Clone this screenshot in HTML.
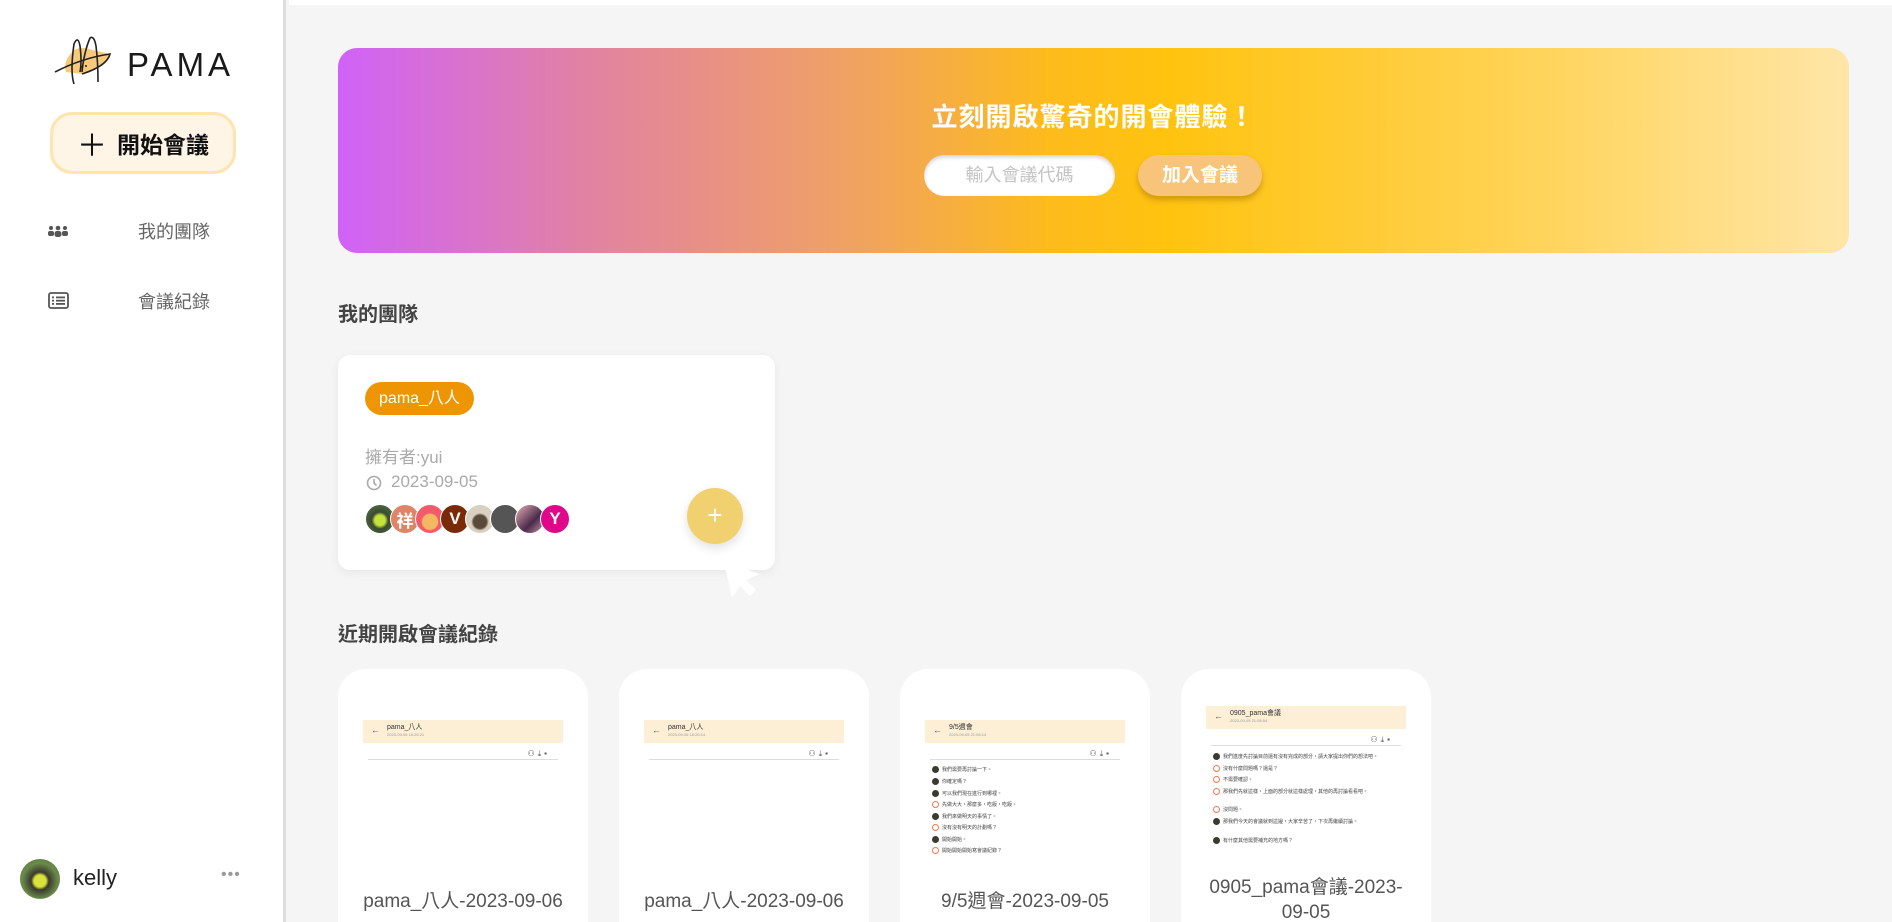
<!DOCTYPE html>
<html style="overflow:hidden;height:922px"><head><meta charset="utf-8"><style>
*{margin:0;padding:0;box-sizing:border-box}
body{width:1892px;height:922px;overflow:hidden;background:#f5f5f5;font-family:"Liberation Sans","Noto Sans CJK TC",sans-serif;position:relative}
.abs{position:absolute}
.side{left:0;top:0;width:286px;height:922px;background:#fff;border-right:3px solid #dcdcdc}
.topstrip{left:289px;top:0;width:1603px;height:5px;background:#fff}
.btn{left:50px;top:112px;width:186px;height:62px;border-radius:22px;background:#fff5e6;border:3px solid #ffe4ad;font-size:23px;font-weight:bold;color:#111;display:flex;align-items:center;justify-content:center;gap:10px}
.nav{font-size:18px;color:#666;left:138px}
.banner{left:338px;top:48px;width:1511px;height:205px;border-radius:19px;background:linear-gradient(90deg,#d062f8 0%,#e283a0 17%,#efa067 33%,#fdbb1c 47%,#ffc30f 55%,#ffd04a 75%,#ffe6a8 100%)}
.title{left:0;width:100%;top:49px;text-align:center;color:#fff;font-size:26px;font-weight:bold;letter-spacing:1px}
.h2{left:338px;font-size:20px;color:#444;font-weight:bold}
.card{background:#fff;border-radius:12px;box-shadow:0 3px 10px rgba(0,0,0,.06)}
.rc{top:669px;width:250px;height:253px;background:#fff;border-radius:28px 28px 0 0;overflow:visible}
.hd{position:absolute;left:25px;width:200px;height:23px;background:#fdefd6}
.hd b{position:absolute;left:24px;top:2px;font-size:7px;font-weight:normal;color:#333}
.hd i{position:absolute;left:24px;top:12px;font-size:4px;font-style:normal;color:#999}
.hd s{position:absolute;left:8px;top:5px;font-size:9px;text-decoration:none;color:#555}
.ic{position:absolute;right:38px;font-size:8px;color:#555;letter-spacing:3px}
.ln{position:absolute;left:30px;width:190px;height:1px;background:#ddd}
.row{position:absolute;left:32px;font-size:5px;color:#444;display:flex;align-items:center;gap:3px}
.row span.a{width:7px;height:7px;border-radius:50%;background:#3a3a2e;display:inline-block}
.row span.o{width:7px;height:7px;border-radius:50%;border:1.5px solid #ef7a4f;display:inline-block}
.rt{position:absolute;left:0;width:100%;text-align:center;font-size:19px;color:#555;line-height:25px}
.av{position:absolute;width:30px;height:30px;border-radius:50%;border:1px solid #fff;top:504px;color:#fff;font-weight:bold;font-size:17px;display:flex;align-items:center;justify-content:center}
</style></head><body>
<div class="abs side"></div>
<div class="abs topstrip"></div>
<svg class="abs" style="left:52px;top:32px" width="62" height="56" viewBox="0 0 62 56">
<path d="M14 40 Q10 30 22 18 Q30 14 40 18 Q50 20 58 22 Q52 36 30 42 Z" fill="#f7c97a"/>
<path d="M3 40 Q30 26 58 22 Q55 34 30 42 M22 52 Q18 40 22 12 Q26 3 28 14 Q30 30 28 40 M30 40 Q32 20 38 6 Q42 3 44 14 Q46 30 46 50" stroke="#222" stroke-width="1.6" fill="none"/>
<circle cx="30" cy="35" r="1" fill="#222"/><circle cx="34" cy="34" r="1" fill="#222"/>
</svg>
<div class="abs" style="left:127px;top:46px;font-size:33px;letter-spacing:4px;color:#1a1a1a">PAMA</div>
<div class="abs btn"><span style="font-size:30px;font-weight:normal">＋</span>開始會議</div>
<svg class="abs" style="left:48px;top:225px" width="20" height="12" viewBox="0 0 20 12"><g fill="#555"><circle cx="3" cy="3" r="2"/><circle cx="10" cy="3" r="2.3"/><circle cx="17" cy="3" r="2"/><rect x="0" y="6" width="6" height="5" rx="2"/><rect x="6.5" y="6" width="7" height="6" rx="2.5"/><rect x="14" y="6" width="6" height="5" rx="2"/></g></svg>
<div class="abs nav" style="top:218px">我的團隊</div>
<svg class="abs" style="left:48px;top:292px" width="21" height="17" viewBox="0 0 21 17"><rect x="1" y="1" width="19" height="15" rx="2" fill="none" stroke="#555" stroke-width="1.8"/><g fill="#555"><rect x="4" y="4.5" width="2" height="1.8"/><rect x="8" y="4.5" width="9" height="1.8"/><rect x="4" y="7.8" width="2" height="1.8"/><rect x="8" y="7.8" width="9" height="1.8"/><rect x="4" y="11" width="2" height="1.8"/><rect x="8" y="11" width="9" height="1.8"/></g></svg>
<div class="abs nav" style="top:288px">會議紀錄</div>
<div class="abs" style="left:20px;top:859px;width:40px;height:40px;border-radius:50%;background:radial-gradient(circle at 50% 55%,#d9e43a 0 20%,#3a3a2e 30%,#6a8a4a 60%,#4a7a3a)"></div>
<div class="abs" style="left:73px;top:865px;font-size:22px;color:#222">kelly</div>
<div class="abs" style="left:221px;top:866px;font-size:16px;color:#999;letter-spacing:1px">•••</div>

<div class="abs banner">
<div class="abs title">立刻開啟驚奇的開會體驗！</div>
<div class="abs" style="left:586px;top:107px;width:191px;height:41px;border-radius:21px;background:#fff;box-shadow:inset 0 2px 4px rgba(0,0,0,.2);color:#c4c4c4;font-size:18px;text-align:center;line-height:41px">輸入會議代碼</div>
<div class="abs" style="left:800px;top:107px;width:124px;height:41px;border-radius:21px;background:#f7c47a;box-shadow:0 4px 6px rgba(120,80,0,.35);color:#fff;font-size:19px;font-weight:bold;text-align:center;line-height:41px">加入會議</div>
</div>

<div class="abs h2" style="top:298px">我的團隊</div>
<div class="abs card" style="left:338px;top:355px;width:437px;height:215px"></div>
<div class="abs" style="left:365px;top:382px;width:109px;height:33px;border-radius:17px;background:#ee9504;color:#fff;font-size:16px;text-align:center;line-height:33px">pama_八人</div>
<div class="abs" style="left:365px;top:443px;font-size:17px;color:#aaa">擁有者:yui</div>
<svg class="abs" style="left:366px;top:475px" width="16" height="16" viewBox="0 0 16 16"><circle cx="8" cy="8" r="6.5" fill="none" stroke="#aaa" stroke-width="1.6"/><path d="M8 4v4l2.5 2.5" stroke="#aaa" stroke-width="1.6" fill="none"/></svg>
<div class="abs" style="left:391px;top:472px;font-size:17px;color:#aaa">2023-09-05</div>
<div class="av" style="left:365px;background:radial-gradient(circle at 50% 55%,#c5e23a 0 25%,#3a4a30 40%,#5a7a4a)"></div>
<div class="av" style="left:390px;background:#e08467">祥</div>
<div class="av" style="left:415px;background:radial-gradient(circle at 50% 60%,#f4b860 0 35%,#f55a6a 40%)"></div>
<div class="av" style="left:440px;background:#7a2a08">V</div>
<div class="av" style="left:465px;background:radial-gradient(circle at 50% 60%,#5a4a3a 0 30%,#d8d0c0 40%)"></div>
<div class="av" style="left:490px;background:#555"></div>
<div class="av" style="left:515px;background:linear-gradient(135deg,#e8b0b8,#4a2a4a 60%,#c89aa8)"></div>
<div class="av" style="left:540px;background:#e0088a">Y</div>
<div class="abs" style="left:687px;top:488px;width:56px;height:56px;border-radius:50%;background:#f1d06f;box-shadow:0 4px 10px rgba(0,0,0,.12);color:#fff;font-size:26px;text-align:center;line-height:54px">+</div>
<svg class="abs" style="left:720px;top:560px" width="45" height="42" viewBox="0 0 45 42"><path d="M4 2 L12 38 L20 26 L30 36 L36 30 L26 20 L40 14 Z" fill="#fff"/></svg>

<div class="abs h2" style="top:618px">近期開啟會議紀錄</div>

<div class="abs rc" style="left:338px">
<div class="hd" style="top:51px"><s>←</s><b>pama_八人</b><i>2023-09-06 16:26:21</i></div>
<div class="ic" style="top:80px">⚇⤓▪</div><div class="ln" style="top:90px"></div>
<div class="rt" style="top:220px">pama_八人-2023-09-06</div></div>
<div class="abs rc" style="left:619px">
<div class="hd" style="top:51px"><s>←</s><b>pama_八人</b><i>2023-09-06 16:26:14</i></div>
<div class="ic" style="top:80px">⚇⤓▪</div><div class="ln" style="top:90px"></div>
<div class="rt" style="top:220px">pama_八人-2023-09-06</div></div>
<div class="abs rc" style="left:900px">
<div class="hd" style="top:51px"><s>←</s><b>9/5週會</b><i>2023-09-05 21:08:14</i></div>
<div class="ic" style="top:80px">⚇⤓▪</div><div class="ln" style="top:90px"></div>
<div class="row" style="top:97px"><span class="a"></span>我們需要再討論一下。</div>
<div class="row" style="top:109px"><span class="a"></span>你確定嗎？</div>
<div class="row" style="top:121px"><span class="a"></span>可以我們現在進行到哪裡。</div>
<div class="row" style="top:132px"><span class="o"></span>先做大大，那麼多，吃飯，吃飯。</div>
<div class="row" style="top:144px"><span class="a"></span>我們來做明天的事情了。</div>
<div class="row" style="top:155px"><span class="o"></span>沒有沒有明天的計劃嗎？</div>
<div class="row" style="top:167px"><span class="a"></span>開始開始。</div>
<div class="row" style="top:178px"><span class="o"></span>開始開始開始寫會議紀錄？</div>
<div class="rt" style="top:220px">9/5週會-2023-09-05</div></div>
<div class="abs rc" style="left:1181px">
<div class="hd" style="top:37px"><s>←</s><b>0905_pama會議</b><i>2023-09-05 21:08:54</i></div>
<div class="ic" style="top:66px">⚇⤓▪</div><div class="ln" style="top:76px"></div>
<div class="row" style="top:84px"><span class="a"></span>我們進度先討論目前還有沒有完成的部分，請大家提出你們的想法吧。</div>
<div class="row" style="top:96px"><span class="o"></span>沒有什麼問題嗎？還是？</div>
<div class="row" style="top:107px"><span class="o"></span>不需要確認。</div>
<div class="row" style="top:119px"><span class="o"></span>那我們先就這樣，上面的部分就這樣處理，其他的再討論看看吧。</div>
<div class="row" style="top:137px"><span class="o"></span>沒問題。</div>
<div class="row" style="top:149px"><span class="a"></span>那我們今天的會議就到這邊，大家辛苦了，下次再繼續討論。</div>
<div class="row" style="top:168px"><span class="a"></span>有什麼其他需要補充的地方嗎？</div>
<div class="rt" style="top:206px">0905_pama會議-2023-<br>09-05</div></div>
</body></html>
